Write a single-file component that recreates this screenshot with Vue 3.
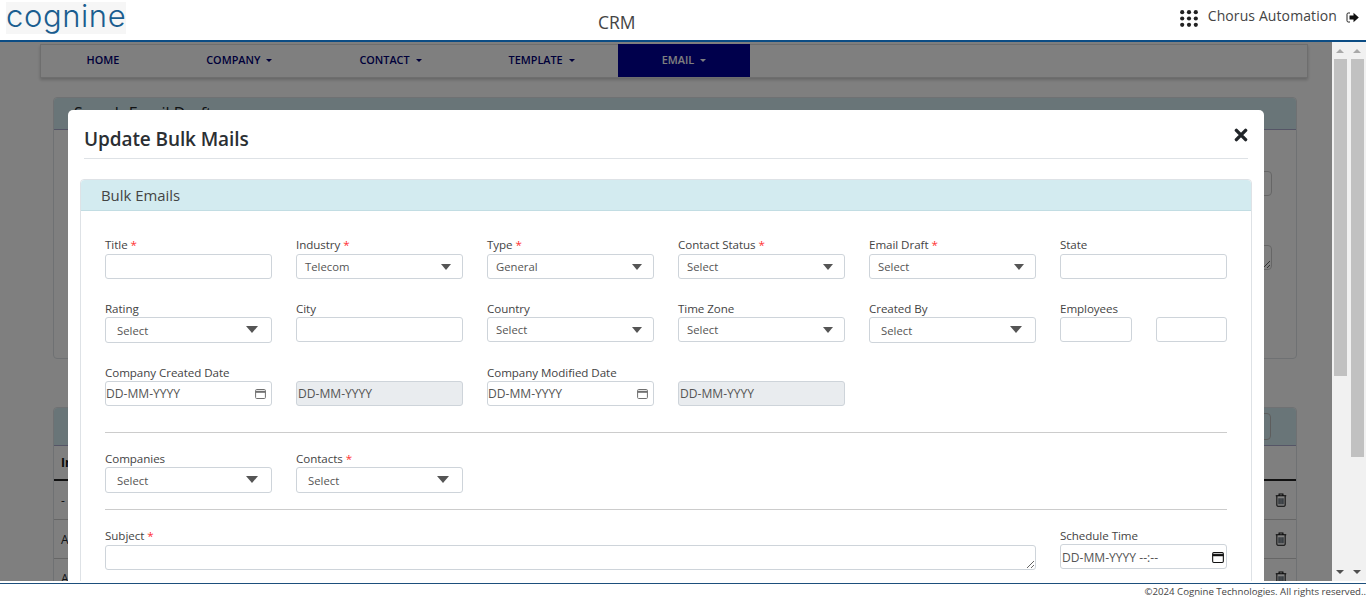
<script setup>
const navItems = [
  { label: 'HOME', caret: false },
  { label: 'COMPANY', caret: true },
  { label: 'CONTACT', caret: true },
  { label: 'TEMPLATE', caret: true },
  { label: 'EMAIL', caret: true, active: true }
]
const rowOne = [
  { label: 'Title', req: true, kind: 'input' },
  { label: 'Industry', req: true, kind: 'native', value: 'Telecom' },
  { label: 'Type', req: true, kind: 'native', value: 'General' },
  { label: 'Contact Status', req: true, kind: 'native', value: 'Select' },
  { label: 'Email Draft', req: true, kind: 'native', value: 'Select' },
  { label: 'State', kind: 'input' }
]
const rowTwo = [
  { label: 'Rating', kind: 'custom', value: 'Select' },
  { label: 'City', kind: 'input' },
  { label: 'Country', kind: 'native', value: 'Select' },
  { label: 'Time Zone', kind: 'native', value: 'Select' },
  { label: 'Created By', kind: 'custom', value: 'Select' }
]
const rows = [1, 2, 3]
</script>

<template>
  <div class="page">
    <header class="topbar">
      <div class="logo">cognine</div>
      <div class="app-title">CRM</div>
      <div class="user">
        <svg class="apps" width="18" height="17" viewBox="0 0 18 17">
          <g fill="#222">
            <circle cx="2.2" cy="2.2" r="2.1" /><circle cx="9" cy="2.2" r="2.1" /><circle cx="15.8" cy="2.2" r="2.1" />
            <circle cx="2.2" cy="8.5" r="2.1" /><circle cx="9" cy="8.5" r="2.1" /><circle cx="15.8" cy="8.5" r="2.1" />
            <circle cx="2.2" cy="14.8" r="2.1" /><circle cx="9" cy="14.8" r="2.1" /><circle cx="15.8" cy="14.8" r="2.1" />
          </g>
        </svg>
        <span class="user-name">Chorus Automation</span>
        <svg class="logout" width="13" height="11" viewBox="0 0 13 11">
          <path d="M4 1H2.2C1.5 1 1 1.5 1 2.2v6.6C1 9.5 1.5 10 2.2 10H4" fill="none" stroke="#222" stroke-width="1" />
          <path d="M3.5 3.6h4V.8L12.8 5.5 7.5 10.2V7.4h-4z" fill="#111" />
        </svg>
      </div>
    </header>

    <main class="main">
      <div class="workspace">
        <nav class="nav">
          <a v-for="n in navItems" :key="n.label" class="nav-item" :class="{ active: n.active }">
            {{ n.label }}<i v-if="n.caret" class="caret"></i>
          </a>
        </nav>

        <section class="back-card first">
          <div class="back-head">Search Email Drafts</div>
          <div class="back-body">
            <input class="back-input" />
            <textarea class="back-area"></textarea>
          </div>
        </section>

        <section class="back-card second">
          <div class="back-head tall"><span class="back-btn"></span></div>
          <div class="back-th"><b>In</b></div>
          <div v-for="(r, i) in rows" :key="r" class="back-tr">
            <span>{{ i === 0 ? '-' : 'A' }}</span>
            <svg width="12" height="14" viewBox="0 0 13 15" fill="none" stroke="#0b0b0b" stroke-width="1.1">
              <path d="M.8 3h11.4M4.4 3V1h4.2v2M2 3v10.2c0 .6.4 1 1 1h7c.6 0 1-.4 1-1V3" />
              <path d="M4.4 5.5v6.5M6.5 5.5v6.5M8.6 5.5v6.5" stroke="#123" />
            </svg>
          </div>
        </section>

        <div class="backdrop"></div>

        <div class="modal">
          <div class="modal-head">
            <h2>Update Bulk Mails</h2>
            <svg class="close" width="14" height="14" viewBox="0 0 14 14">
              <path d="M2.4 2.4l9.2 9.2M11.6 2.4l-9.2 9.2" stroke="#212529" stroke-width="3.4" stroke-linecap="round" />
            </svg>
          </div>

          <div class="card">
            <div class="card-head">Bulk Emails</div>
            <div class="card-body">
              <div class="row r1">
                <div v-for="f in rowOne" :key="f.label" class="field">
                  <label>{{ f.label }}<em v-if="f.req"> *</em></label>
                  <input v-if="f.kind === 'input'" class="ctl" />
                  <div v-else class="ctl sel"><span>{{ f.value }}</span><i class="tri"></i></div>
                </div>
              </div>

              <div class="row r2">
                <div v-for="f in rowTwo" :key="f.label" class="field">
                  <label>{{ f.label }}</label>
                  <input v-if="f.kind === 'input'" class="ctl" />
                  <div v-else-if="f.kind === 'native'" class="ctl sel"><span>{{ f.value }}</span><i class="tri"></i></div>
                  <div v-else class="ctl sel big"><span>{{ f.value }}</span><i class="tri"></i></div>
                </div>
                <div class="field">
                  <label>Employees</label>
                  <div class="pair"><input class="ctl" /><input class="ctl" /></div>
                </div>
              </div>

              <div class="row r3">
                <div class="field">
                  <label>Company Created Date</label>
                  <div class="ctl date"><span>DD-MM-YYYY</span>
                    <svg width="11" height="11" viewBox="0 0 11 11" fill="none" stroke="#6f6f6f"><rect x=".6" y="1.5" width="9.8" height="9" rx="1" /><path d="M.6 3.8h9.8" stroke-width="2" /></svg>
                  </div>
                </div>
                <div class="field">
                  <label>&nbsp;</label>
                  <div class="ctl date off"><span>DD-MM-YYYY</span></div>
                </div>
                <div class="field">
                  <label>Company Modified Date</label>
                  <div class="ctl date"><span>DD-MM-YYYY</span>
                    <svg width="11" height="11" viewBox="0 0 11 11" fill="none" stroke="#6f6f6f"><rect x=".6" y="1.5" width="9.8" height="9" rx="1" /><path d="M.6 3.8h9.8" stroke-width="2" /></svg>
                  </div>
                </div>
                <div class="field">
                  <label>&nbsp;</label>
                  <div class="ctl date off"><span>DD-MM-YYYY</span></div>
                </div>
              </div>

              <hr class="rule rule-a" />

              <div class="row r4">
                <div class="field">
                  <label>Companies</label>
                  <div class="ctl sel big"><span>Select</span><i class="tri"></i></div>
                </div>
                <div class="field">
                  <label>Contacts<em> *</em></label>
                  <div class="ctl sel big"><span>Select</span><i class="tri"></i></div>
                </div>
              </div>

              <hr class="rule rule-b" />

              <div class="row r5">
                <div class="field wide">
                  <label>Subject<em> *</em></label>
                  <textarea class="ctl area"></textarea>
                </div>
                <div class="field">
                  <label>Schedule Time</label>
                  <div class="ctl date sched"><span>DD-MM-YYYY --:--</span>
                    <svg width="12" height="12" viewBox="0 0 11 11" fill="none" stroke="#111"><rect x=".6" y="1.5" width="9.8" height="9" rx="1" /><path d="M.6 3.8h9.8" stroke-width="2" /></svg>
                  </div>
                </div>
              </div>
            </div>
          </div>
        </div>
      </div>

      <div class="scrollbars">
        <div class="sb"><i class="up"></i><b class="thumb one"></b><i class="down"></i></div>
        <div class="sb"><i class="up"></i><b class="thumb two"></b><i class="down"></i></div>
      </div>
    </main>

    <footer class="footer">©2024 Cognine Technologies. All rights reserved..</footer>
  </div>
</template>

<style>
html, body { margin: 0; background: #fff; overflow: hidden; }
</style>

<style scoped>
* { box-sizing: border-box; }
.page {
  width: 1366px; height: 599px; display: flex; flex-direction: column; overflow: hidden;
  font-family: "Open Sans", "Noto Sans", sans-serif; color: #212529; background: #fff;
}
.topbar {
  height: 42px; flex: none; display: flex; border-bottom: 2px solid #0b4c84; background: #fff; position: relative;
}
.logo {
  width: 120px; height: 32px; margin: 2px 0 0 6px; background: #f6f6f6; color: #1a5d8f;
  font: 300 31px/27px Inter, sans-serif; letter-spacing: .6px; text-align: center; white-space: nowrap;
}
.app-title { margin: 12px 0 0 472px; font-size: 17.5px; line-height: 20px; color: #444; }
.user { margin-left: auto; display: flex; align-items: flex-start; padding: 10px 7px 0 0; }
.user-name { margin: -4px 0 0 10px; font-size: 14px; line-height: 20px; color: #444; letter-spacing: .1px; }
.logout { margin: 2px 0 0 9px; }

.main { height: 539px; flex: none; display: flex; overflow: hidden; }
.workspace { width: 1332px; position: relative; background: #fff; overflow: hidden; padding-top: 2px; }
.nav {
  margin-left: 40px; width: 1268px; height: 34px; display: flex; padding-left: 2px;
  border: 1px solid #dcdcdc; box-shadow: 0 2px 3px rgba(0,0,0,.2);
}
.nav-item {
  display: block; padding: 0 43.5px; font-size: 10.85px; font-weight: 600; line-height: 30px; color: #000074; white-space: nowrap;
}
.nav-item.active { background: #000098; color: #fff; height: 33px; margin-top: -1px; line-height: 32px; }
.caret {
  display: inline-block; margin-left: 6px; vertical-align: 2px;
  border-top: 3px solid currentColor; border-left: 3px solid transparent; border-right: 3px solid transparent;
}
.back-card { margin-left: 53px; width: 1244px; border: 1px solid #dee2e6; border-radius: 4px; }
.first { margin-top: 19px; height: 262px; }
.second { margin-top: 48px; }
.back-head { height: 32px; background: #d3ebf0; border-bottom: 1px solid #aac; padding: 4px 20px; font-size: 16px; line-height: 22px; border-radius: 4px 4px 0 0; position: relative; }
.back-head.tall { height: 38px; }
.back-btn { display: block; position: absolute; right: 25px; top: 5px; width: 80px; height: 27px; background: #d3ebf0; border: 1px solid #bbb; border-radius: 4px; }
.back-body { display: flex; flex-direction: column; align-items: flex-end; padding: 41px 24px 0 0; }
.back-input { width: 100px; height: 25px; border: 1px solid #ccc; border-radius: 4px; }
.back-area { width: 100px; height: 25px; margin-top: 49px; border: 1px solid #ccc; border-radius: 4px; display: block; }
.back-th { height: 35px; padding: 8px 7px; border-bottom: 2px solid #222; font-size: 12px; color: #111; }
.back-tr { height: 39px; padding: 0 9px 0 7px; display: flex; justify-content: space-between; align-items: center; border-bottom: 1px solid #ccc; font-size: 12px; }
.backdrop { position: absolute; inset: 0; background: rgba(0,0,0,.5); }

.modal {
  position: absolute; left: 68px; top: 68px; width: 1196px; height: 600px;
  background: #fff; border-radius: 5px; padding: 0 12px;
}
.modal-head {
  height: 49px; margin: 0 4px; border-bottom: 1px solid #dee2e6; display: flex; justify-content: space-between;
}
.modal-head h2 { margin: 15px 0 0; font-size: 19px; line-height: 28px; font-weight: 600; letter-spacing: -.1px; color: #2b2f33; }
.close { margin-top: 18px; }
.card { margin-top: 20px; border: 1px solid #dee2e6; border-radius: 4px; height: 500px; }
.card-head {
  height: 31px; background: #d3ebf0; border-bottom: 1px solid #c2dde3; border-radius: 4px 4px 0 0;
  padding: 3px 20px; font-size: 14.9px; line-height: 24px; color: #444;
}
.card-body { padding: 25px 24px 0; }
.row { display: grid; grid-template-columns: repeat(6, 167px); column-gap: 24px; height: 43px; align-items: start; }
.r1 { margin-bottom: 20px; }
.r2 { margin-bottom: 21px; }
.field { min-width: 0; }
.wide { grid-column: span 5; }
label { display: block; height: 18px; font-size: 11.6px; line-height: 19px; color: #444; white-space: nowrap; letter-spacing: -.06px; }
.r1 label, .r5 label { line-height: 17px; }
label em { color: #f33; font-style: normal; }
.ctl {
  display: block; width: 100%; height: 25px; border: 1px solid #ced4da; border-radius: 3px; background: #fff;
  font-family: inherit; font-size: 11.3px; color: #555; outline: none;
}
.sel { display: flex; align-items: center; justify-content: space-between; padding: 0 11px 0 8px; }
.tri { width: 0; height: 0; border-top: 6px solid #555; border-left: 5.5px solid transparent; border-right: 5.5px solid transparent; }
.big { height: 26px; padding: 0 13px 0 11px; }
.big .tri { border-top-width: 7px; border-left-width: 6.5px; border-right-width: 6.5px; margin-top: -1px; }
.pair { display: grid; grid-template-columns: 72px 71px; column-gap: 24px; }
.date { display: flex; align-items: center; justify-content: space-between; padding: 0 5px 0 0; font-size: 12.1px; }
.off { background: #e9ecef; padding-left: 1px; }
.sched { margin-top: -1px; padding: 1px 2px 0 1px; }
.rule { margin: 0; border: 0; border-top: 1px solid #ccc; }
.rule-a { margin-top: 26px; margin-bottom: 16px; }
.rule-b { margin-top: 0; margin-bottom: 17px; }
.r4 { height: 44px; margin-bottom: 16px; }
.area { height: 25px; resize: vertical; }

.scrollbars { width: 34px; flex: none; background: #f1f1f1; display: flex; gap: 4px; padding-left: 2px; }
.sb { width: 13px; height: 100%; position: relative; display: flex; flex-direction: column; }
.up, .down { position: absolute; left: 2px; width: 0; height: 0; border-left: 4px solid transparent; border-right: 4px solid transparent; }
.up { top: 7px; border-bottom: 4px solid #a9a9a9; }
.down { bottom: 7px; border-top: 4px solid #505050; }
.thumb { display: block; margin-top: 17px; background: #c1c1c1; }
.one { height: 317px; }
.two { height: 398px; }

.footer {
  margin-top: 2px; flex: 1; border-top: 1px solid #1d4f7c; text-align: right; font-size: 9.65px; line-height: 15px; color: #444; white-space: nowrap;
}
</style>
